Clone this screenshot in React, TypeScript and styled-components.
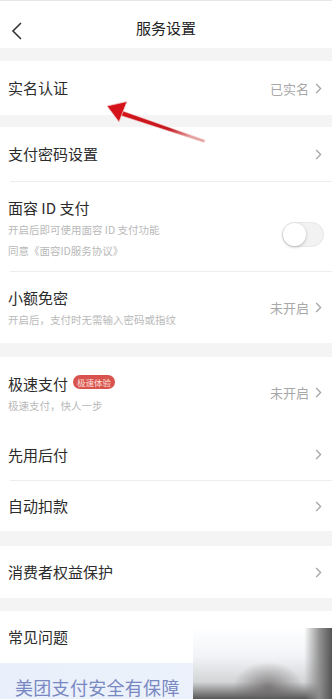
import React from "react";
import styled, { createGlobalStyle } from "styled-components";

const Global = createGlobalStyle`
  html, body { margin: 0; padding: 0; background: #f5f5f5; }
  body { font-family: "Noto Sans CJK SC", "Noto Sans", sans-serif; }
  * { box-sizing: border-box; }
`;

const Page = styled.div`
  position: relative;
  width: 332px;
  height: 699px;
  overflow: hidden;
  background: #f4f4f4;
  border-top: 1px solid #e6e6e6;
`;

const Header = styled.header`
  height: 47px;
  background: #fff;
  display: flex;
  align-items: center;
  justify-content: center;
  position: relative;
`;

const Back = styled.div`
  position: absolute;
  left: 11px;
  top: 21px;
  width: 12px;
  height: 18px;
  display: flex;
`;

const Title = styled.h1`
  margin: 0;
  font-size: 15px;
  font-weight: 400;
  color: #222;
  padding-top: 6px;
`;

const Group = styled.section<{ $gap: number }>`
  margin-top: ${(p) => p.$gap}px;
  background: #fff;
  display: flex;
  flex-direction: column;
`;

const Row = styled.div<{ $h: number; $top?: number; $align?: string }>`
  height: ${(p) => p.$h}px;
  display: flex;
  align-items: ${(p) => p.$align || "center"};
  padding: ${(p) => p.$top ?? 0}px 10px 0 8px;
  position: relative;
`;

const Divider = styled.div`
  height: 1px;
  background: #eeeeee;
  margin-left: 10px;
`;

const Main = styled.div`
  flex: 1;
  display: flex;
  flex-direction: column;
`;

const Label = styled.div`
  font-size: 15px;
  line-height: 22px;
  color: #2b2b2b;
  display: flex;
  align-items: center;
  gap: 5px;
`;

const Sub = styled.div`
  font-size: 10.5px;
  line-height: 21px;
  color: #b9b9b9;
`;

const Badge = styled.span`
  display: inline-flex;
  align-items: center;
  justify-content: center;
  height: 14px;
  padding: 0 4px;
  border-radius: 7px;
  background: #d9534e;
  color: #fbe1df;
  font-size: 8.5px;
  line-height: 14px;
  margin-top: -4px;
`;

const Value = styled.span`
  font-size: 13px;
  color: #a8a8a8;
  margin-right: 6px;
`;

const Right = styled.div<{ $dy?: number }>`
  display: flex;
  align-items: center;
  margin-top: ${(p) => p.$dy ?? 0}px;
`;

const Toggle = styled.div`
  width: 42px;
  height: 25px;
  border-radius: 13px;
  background: #f2f2f2;
  border: 1px solid #e6e6e6;
  position: relative;
  margin-right: -2px;
  margin-top: 5px;
`;

const Knob = styled.div`
  position: absolute;
  left: 0;
  top: 0;
  width: 23px;
  height: 23px;
  border-radius: 50%;
  background: #fff;
  box-shadow: 0 1px 3px rgba(0, 0, 0, 0.25);
`;

const Banner = styled.div`
  height: 36px;
  background: linear-gradient(90deg, #e9f0fb, #eef3fb);
  display: flex;
  align-items: flex-end;
  padding: 0 0 0 15px;
`;

const BannerText = styled.div`
  font-size: 18px;
  line-height: 24px;
  color: #7a88c2;
  letter-spacing: 0.3px;
`;

const Photo = styled.div`
  position: absolute;
  left: 193px;
  top: 627px;
  width: 139px;
  height: 72px;
  background-color: #f4f5f7;
  background-image:
    radial-gradient(closest-side, rgba(100, 95, 95, 0.7), rgba(100, 95, 95, 0)),
    linear-gradient(90deg, rgba(255, 255, 255, 0) 80%, rgba(140, 140, 140, 0.95) 91%, #555 100%),
    linear-gradient(180deg, #ffffff 0%, #f1f3f6 40%, #d4d5d7 75%, #4f4f4f 100%);
  background-size: 70px 50px, 100% 100%, 100% 100%;
  background-position: 40px 34px, 0 0, 0 0;
  background-repeat: no-repeat;
`;

const Arrow = styled.svg`
  position: absolute;
  left: 100px;
  top: 96px;
`;

const Chevron = () => (
  <svg width="7" height="11" viewBox="0 0 7 11">
    <path d="M1.2 1 L5.6 5.5 L1.2 10" fill="none" stroke="#a5a5a5" strokeWidth="1.3" />
  </svg>
);

export default function App() {
  return (
    <>
      <Global />
      <Page>
        <Header>
          <Back>
            <svg width="12" height="18" viewBox="0 0 12 18">
              <path d="M10 1 L2 9 L10 17" fill="none" stroke="#333" strokeWidth="1.6" />
            </svg>
          </Back>
          <Title>服务设置</Title>
        </Header>

        <Group $gap={13}>
          <Row $h={54}>
            <Main>
              <Label>实名认证</Label>
            </Main>
            <Right>
              <Value>已实名</Value>
              <Chevron />
            </Right>
          </Row>
        </Group>

        <Group $gap={12}>
          <Row $h={54}>
            <Main>
              <Label>支付密码设置</Label>
            </Main>
            <Right>
              <Chevron />
            </Right>
          </Row>
          <Divider />
          <Row $h={89} $top={15} $align="flex-start">
            <Main>
              <Label>面容 ID 支付</Label>
              <Sub>开启后即可使用面容 ID 支付功能</Sub>
              <Sub>同意《面容ID服务协议》</Sub>
            </Main>
            <Right $dy={20}>
              <Toggle>
                <Knob />
              </Toggle>
            </Right>
          </Row>
          <Divider />
          <Row $h={71} $top={15} $align="flex-start">
            <Main>
              <Label>小额免密</Label>
              <Sub>开启后，支付时无需输入密码或指纹</Sub>
            </Main>
            <Right $dy={11}>
              <Value>未开启</Value>
              <Chevron />
            </Right>
          </Row>
        </Group>

        <Group $gap={14}>
          <Row $h={72} $top={16} $align="flex-start">
            <Main>
              <Label>
                极速支付<Badge>极速体验</Badge>
              </Label>
              <Sub>极速支付，快人一步</Sub>
            </Main>
            <Right $dy={10}>
              <Value>未开启</Value>
              <Chevron />
            </Right>
          </Row>
          <Row $h={51}>
            <Main>
              <Label>先用后付</Label>
            </Main>
            <Right>
              <Chevron />
            </Right>
          </Row>
          <Divider />
          <Row $h={50}>
            <Main>
              <Label>自动扣款</Label>
            </Main>
            <Right>
              <Chevron />
            </Right>
          </Row>
        </Group>

        <Group $gap={15}>
          <Row $h={52}>
            <Main>
              <Label>消费者权益保护</Label>
            </Main>
            <Right>
              <Chevron />
            </Right>
          </Row>
        </Group>

        <Group $gap={13}>
          <Row $h={52}>
            <Main>
              <Label>常见问题</Label>
            </Main>
          </Row>
          <Banner>
            <BannerText>美团支付安全有保障</BannerText>
          </Banner>
        </Group>

        <Photo />

        <Arrow width="112" height="50" viewBox="0 0 112 50">
          <defs>
            <linearGradient id="ag" x1="0" y1="0" x2="1" y2="0.4">
              <stop offset="0" stopColor="#d4141a" />
              <stop offset="0.7" stopColor="#c41a20" />
              <stop offset="1" stopColor="#e5a0a0" />
            </linearGradient>
          </defs>
          <path d="M20 13 L105 43 L104 45.5 L19 18 Z" fill="url(#ag)" stroke="#f5dada" strokeWidth="0.6" />
          <path d="M7 9 L27 4.5 L19 25 Z" fill="#d4141a" stroke="#f2c8c8" strokeWidth="0.8" />
        </Arrow>
      </Page>
    </>
  );
}
